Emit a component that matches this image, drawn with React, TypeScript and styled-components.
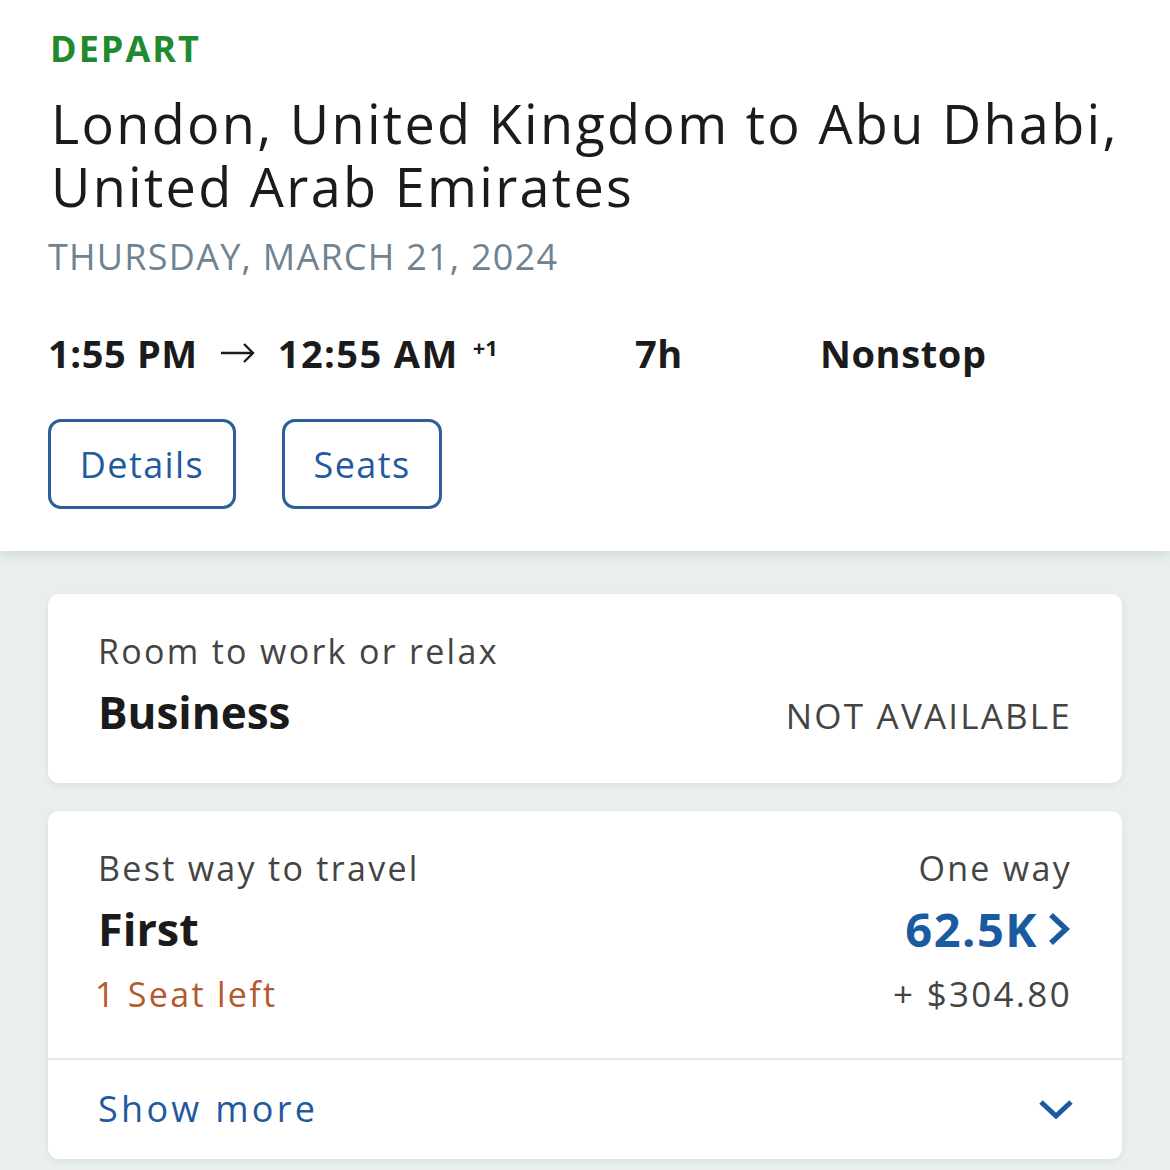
import React from 'react';
import styled, { createGlobalStyle } from 'styled-components';

const GlobalStyle = createGlobalStyle`
    html, body {
        margin: 0;
        padding: 0;
        background: #e9eeef;
        font-family: "Open Sans", "Noto Sans", "Liberation Sans", sans-serif;
        color: #1b1b1b;
    }
`;

const Page = styled.div`
    width: 1170px;
    min-height: 1170px;
    background: #e9eeef;
`;

const Header = styled.header`
    background: #ffffff;
    padding: 27px 40px 42px 48px;
    box-shadow: 0 3px 12px rgba(0, 0, 0, 0.1);
    position: relative;
`;

const Label = styled.div`
    color: #1f8a2e;
    font-size: 36px;
    line-height: 44px;
    font-weight: 700;
    letter-spacing: 2px;
    padding-left: 2px;
`;

const Title = styled.h1`
    margin: 21px 0 0;
    font-size: 54px;
    line-height: 63px;
    font-weight: 400;
    letter-spacing: 2.3px;
    padding-left: 3px;
    color: #1b1b1b;
    white-space: nowrap;
`;

const DateLine = styled.div`
    margin-top: 17px;
    color: #6f8391;
    font-size: 36px;
    line-height: 44px;
    letter-spacing: 1.25px;
    text-transform: uppercase;
`;

const TimesRow = styled.div`
    margin-top: 51px;
    display: grid;
    grid-template-columns: 587px 185px auto;
    align-items: baseline;
    font-size: 38px;
    line-height: 46px;
    font-weight: 700;
    letter-spacing: 0.6px;
`;

const TimeGroup = styled.div`
    display: flex;
    align-items: center;
`;

const Arrival = styled.span`
    letter-spacing: 1.4px;
`;

const ArrowIcon = styled.svg`
    width: 36px;
    height: 22px;
    margin: 0 22px 0 22px;
    flex: none;
`;

const Plus = styled.sup`
    font-size: 22px;
    line-height: 0;
    margin-left: 14px;
    position: relative;
    top: -6px;
    letter-spacing: 0;
`;

const ButtonRow = styled.div`
    margin-top: 43px;
    display: flex;
    gap: 46px;
`;

const OutlineButton = styled.button<{ $w: number }>`
    width: ${({ $w }) => $w}px;
    height: 90px;
    box-sizing: border-box;
    border: 3px solid #2c5f9a;
    border-radius: 13px;
    background: #ffffff;
    color: #1f5a9c;
    font-family: inherit;
    font-size: 36px;
    letter-spacing: 1.4px;
    padding: 0;
`;

const Content = styled.main`
    padding: 43px 48px 0;
    display: flex;
    flex-direction: column;
    gap: 28px;
`;

const Card = styled.section`
    background: #ffffff;
    border-radius: 11px;
    box-shadow: 0 2px 6px rgba(0, 0, 0, 0.07);
    overflow: hidden;
`;

const CardBody = styled.div`
    padding: 37px 50px 44px;
    display: flex;
    justify-content: space-between;
`;

const Column = styled.div<{ $right?: boolean; $grow?: boolean }>`
    display: flex;
    flex-direction: column;
    align-items: ${({ $right }) => ($right ? 'flex-end' : 'flex-start')};
    flex: ${({ $grow }) => ($grow ? 1 : 'none')};
`;

const Sub = styled.div`
    font-size: 34px;
    line-height: 40px;
    letter-spacing: 2.3px;
    color: #444444;
`;

const CabinRow = styled.div`
    margin-top: 14px;
    display: flex;
    justify-content: space-between;
    align-items: baseline;
    width: 100%;
`;

const Cabin = styled.div`
    margin-top: 14px;
    font-size: 45px;
    line-height: 54px;
    font-weight: 700;
    color: #1b1b1b;

    ${CabinRow} & {
        margin-top: 0;
        font-size: 44px;
    }
`;

const Unavailable = styled.div`
    font-size: 35px;
    letter-spacing: 2.2px;
    color: #444444;
`;

const Price = styled.div`
    margin-top: 14px;
    font-size: 47px;
    line-height: 54px;
    font-weight: 700;
    letter-spacing: 1.5px;
    color: #1a5aa0;
    display: flex;
    align-items: center;
    gap: 8px;
`;

const SeatsLeft = styled.div`
    margin-top: 18px;
    font-size: 34px;
    line-height: 40px;
    letter-spacing: 2.3px;
    color: #b5582a;
    margin-left: -3px;
`;

const Fee = styled.div`
    margin-top: 18px;
    font-size: 35px;
    line-height: 40px;
    letter-spacing: 2.3px;
    color: #444444;
`;

const ShowMore = styled.button`
    width: 100%;
    border: none;
    border-top: 2px solid #e8e8e8;
    background: #ffffff;
    padding: 27px 48px 28px 50px;
    display: flex;
    justify-content: space-between;
    align-items: center;
    font-family: inherit;
    font-size: 36px;
    line-height: 44px;
    letter-spacing: 3.3px;
    color: #1f5a9c;
`;

const Chevron = styled.svg<{ $w: number; $h: number }>`
    width: ${({ $w }) => $w}px;
    height: ${({ $h }) => $h}px;
    flex: none;
`;

const App: React.FC = () => {
    return (
        <Page>
            <GlobalStyle />
            <Header>
                <Label>DEPART</Label>
                <Title>
                    London, United Kingdom to Abu Dhabi,
                    <br />
                    United Arab Emirates
                </Title>
                <DateLine>Thursday, March 21, 2024</DateLine>
                <TimesRow>
                    <TimeGroup>
                        <span>1:55 PM</span>
                        <ArrowIcon viewBox="0 0 36 22" fill="none" stroke="#1b1b1b" strokeWidth="2.4">
                            <path d="M1 11h32M24 2l9 9-9 9" />
                        </ArrowIcon>
                        <Arrival>12:55 AM</Arrival>
                        <Plus>+1</Plus>
                    </TimeGroup>
                    <span>7h</span>
                    <span>Nonstop</span>
                </TimesRow>
                <ButtonRow>
                    <OutlineButton $w={188}>Details</OutlineButton>
                    <OutlineButton $w={160}>Seats</OutlineButton>
                </ButtonRow>
            </Header>
            <Content>
                <Card>
                    <CardBody>
                        <Column $grow>
                            <Sub>Room to work or relax</Sub>
                            <CabinRow>
                                <Cabin>Business</Cabin>
                                <Unavailable>NOT AVAILABLE</Unavailable>
                            </CabinRow>
                        </Column>
                    </CardBody>
                </Card>
                <Card>
                    <CardBody>
                        <Column>
                            <Sub>Best way to travel</Sub>
                            <Cabin>First</Cabin>
                            <SeatsLeft>1 Seat left</SeatsLeft>
                        </Column>
                        <Column $right>
                            <Sub>One way</Sub>
                            <Price>
                                62.5K
                                <Chevron $w={26} $h={34} viewBox="0 0 26 34" fill="none" stroke="#1a5aa0" strokeWidth="5.5">
                                    <path d="M5 3l15 14-15 14" />
                                </Chevron>
                            </Price>
                            <Fee>+ $304.80</Fee>
                        </Column>
                    </CardBody>
                    <ShowMore>
                        Show more
                        <Chevron $w={36} $h={20} viewBox="0 0 36 20" fill="none" stroke="#1a5aa0" strokeWidth="5">
                            <path d="M3 3l15 14 15-14" />
                        </Chevron>
                    </ShowMore>
                </Card>
            </Content>
        </Page>
    );
};

export default App;
